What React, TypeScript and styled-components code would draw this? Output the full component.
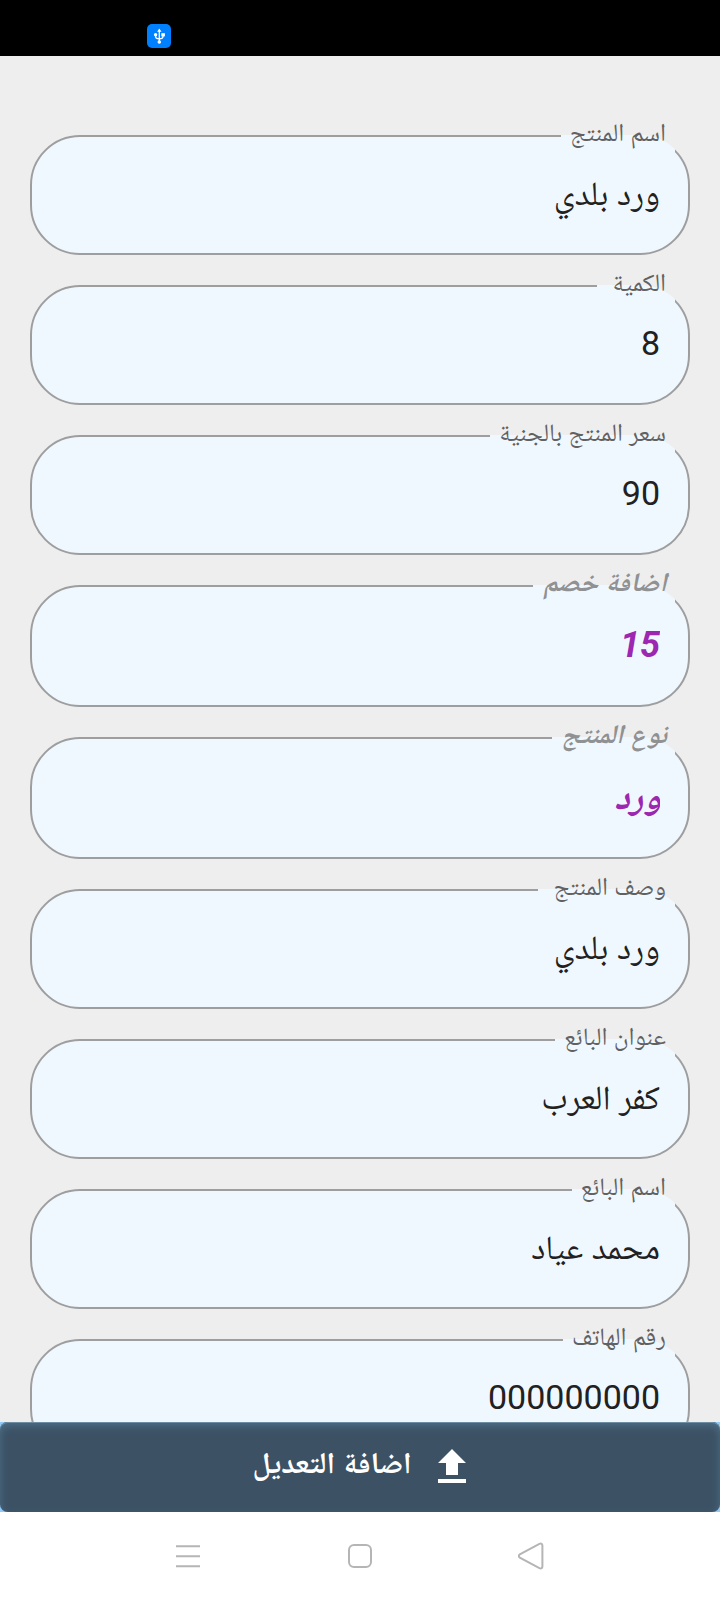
import React, { useId, useState } from 'react';
import styled, { createGlobalStyle, css } from 'styled-components';

const GlobalStyle = createGlobalStyle`
  *, *::before, *::after { box-sizing: border-box; }
  body { margin: 0; background: #eeeeee; }
  input, button {
    font-family: Roboto, 'Noto Naskh Arabic UI', 'Noto Naskh Arabic', 'DejaVu Sans', sans-serif;
  }
`;

const Screen = styled.div`
  display: flex;
  flex-direction: column;
  height: 100vh;
  direction: rtl;
  background: #eeeeee;
  font-family: Roboto, 'Noto Naskh Arabic UI', 'Noto Naskh Arabic', 'DejaVu Sans', sans-serif;
`;

const StatusBar = styled.header`
  display: flex;
  align-items: flex-end;
  justify-content: flex-end;
  flex: none;
  height: 56px;
  padding: 8px 147px;
  background: #000000;
`;

const UsbBadge = styled.span`
  display: flex;
  width: 24px;
  height: 24px;
  border-radius: 5px;
  background: #007fff;
`;

const Form = styled.form`
  display: flex;
  flex-direction: column;
  flex: 1;
  min-height: 0;
`;

const Fields = styled.div`
  display: flex;
  flex-direction: column;
  flex: 1;
  gap: 15px;
  min-height: 0;
  padding: 64px 30px 0;
  overflow-y: auto;
  scrollbar-width: none;
`;

const FieldBox = styled.fieldset`
  flex: none;
  min-width: 0;
  margin: 0;
  padding: 0 13px;
  border: 2px solid #9e9e9e;
  border-radius: 50px;
  background: #f0f8ff;
`;

const Legend = styled.legend<{ $accent?: boolean }>`
  height: 32px;
  padding: 0 9px;
  color: #616161;
  font-size: 25px;
  line-height: 32px;
  white-space: pre;
  ${(p) =>
    p.$accent &&
    css`
      color: #8f9193;
      font-size: 27px;
      font-style: italic;
      font-weight: 700;
    `}
`;

/* Digits come from Roboto and words from Naskh, whose line box is taller below
   the baseline, so the two kinds take different bottom padding. */
const ValueInput = styled.input<{ $accent?: boolean; $digits?: boolean }>`
  display: block;
  width: 100%;
  height: 101px;
  padding: 0 15px ${(p) => (p.$digits ? 20 : 12)}px;
  border: 0;
  outline: 0;
  background: transparent;
  color: #212121;
  font-size: 34px;
  line-height: 40px;
  text-align: right;
  ${(p) =>
    p.$accent &&
    css`
      height: 103px;
      padding-bottom: ${p.$digits ? 18 : 10}px;
      color: #9c27b0;
      font-size: 36px;
      font-style: italic;
      font-weight: 700;
    `}
`;

const SubmitArea = styled.div`
  flex: none;
  background: #90caf9;
`;

const SubmitButton = styled.button`
  display: flex;
  align-items: center;
  justify-content: center;
  gap: 16px;
  width: 100%;
  height: 90px;
  padding: 0 24px 0 32px;
  border: 0;
  border-radius: 8px;
  background: #3c5164;
  box-shadow: inset 0 1px 0 #6f8ea3, inset 0 4px 8px #4d6f88;
  color: #ffffff;
  font-size: 30px;
  font-weight: 700;
  line-height: 32px;
`;

const NavBar = styled.nav`
  display: flex;
  flex: none;
  height: 88px;
  padding: 0 102px;
  background: #ffffff;
`;

const NavButton = styled.button`
  display: flex;
  flex: 1;
  align-items: center;
  justify-content: center;
  padding: 0;
  border: 0;
  background: transparent;
`;

type FieldData = { label: string; value: string; accent?: boolean; mode?: 'numeric' | 'tel' };

const FIELDS: FieldData[] = [
  { label: 'اسم المنتج', value: 'ورد بلدي' },
  { label: 'الكمية ', value: '8', mode: 'numeric' },
  { label: 'سعر المنتج بالجنية', value: '90', mode: 'numeric' },
  { label: 'اضافة خصم', value: '15', accent: true, mode: 'numeric' },
  { label: 'نوع المنتج', value: 'ورد', accent: true },
  { label: 'وصف المنتج ', value: 'ورد بلدي' },
  { label: 'عنوان البائع', value: 'كفر العرب' },
  { label: 'اسم البائع', value: 'محمد عياد' },
  { label: 'رقم الهاتف', value: '000000000', mode: 'tel' },
];

function Field({ label, value, accent, mode }: FieldData) {
  const id = useId();
  const [text, setText] = useState(value);
  return (
    <FieldBox>
      <Legend $accent={accent}>
        <label htmlFor={id}>{label}</label>
      </Legend>
      <ValueInput
        id={id}
        $accent={accent}
        $digits={mode !== undefined}
        inputMode={mode}
        value={text}
        onChange={(e) => setText(e.target.value)}
      />
    </FieldBox>
  );
}

const UsbIcon = () => (
  <svg width="24" height="24" viewBox="0 0 24 24" fill="none" stroke="#ffffff" strokeWidth="1.3">
    <path d="M12.3 6.5V18M8.6 11v1.6c0 1.6 1.2 2.3 3.7 2.3s3.7-.7 3.7-2.3V11" />
    <path d="M12.3 4.6l2.2 3.2h-4.4z" fill="#ffffff" stroke="none" />
    <circle cx="8.6" cy="10.8" r="1.7" fill="#ffffff" stroke="none" />
    <rect x="14.3" y="9.2" width="3.6" height="3.2" fill="#ffffff" stroke="none" />
    <circle cx="12.3" cy="18" r="1.8" fill="#ffffff" stroke="none" />
  </svg>
);

const UploadIcon = () => (
  <svg width="48" height="48" viewBox="0 0 24 24" fill="currentColor" aria-hidden="true">
    <path d="M5 20h14v-2H5v2zm0-10h4v6h6v-6h4l-7-7-7 7z" />
  </svg>
);

const BackIcon = () => (
  <svg width="28" height="28" viewBox="0 0 28 28" fill="none" stroke="#b5b5b5" strokeWidth="2">
    <path d="M1.8 12.4 21.4 1.9Q24.3 .8 24.4 3.6V24.4Q24.3 27.2 21.4 26.1L1.8 15.6Q-.4 14 1.8 12.4Z" />
  </svg>
);

const HomeIcon = () => (
  <svg width="24" height="24" viewBox="0 0 24 24" fill="none" stroke="#b5b5b5" strokeWidth="2">
    <rect x="1" y="1" width="22" height="22" rx="5" />
  </svg>
);

const RecentsIcon = () => (
  <svg width="24" height="24" viewBox="0 0 24 24" fill="none" stroke="#b5b5b5" strokeWidth="2">
    <path d="M0 2.3h24M0 12.3h24M0 22.3h24" />
  </svg>
);

export default function App() {
  return (
    <Screen lang="ar">
      <GlobalStyle />
      <StatusBar>
        <UsbBadge>
          <UsbIcon />
        </UsbBadge>
      </StatusBar>
      <Form onSubmit={(e) => e.preventDefault()}>
        <Fields>
          {FIELDS.map((f) => (
            <Field key={f.label} {...f} />
          ))}
        </Fields>
        <SubmitArea>
          <SubmitButton type="submit">
            <UploadIcon />
            <span>اضافة التعديل</span>
          </SubmitButton>
        </SubmitArea>
      </Form>
      <NavBar>
        <NavButton type="button" aria-label="رجوع">
          <BackIcon />
        </NavButton>
        <NavButton type="button" aria-label="الرئيسية">
          <HomeIcon />
        </NavButton>
        <NavButton type="button" aria-label="التطبيقات الأخيرة">
          <RecentsIcon />
        </NavButton>
      </NavBar>
    </Screen>
  );
}
